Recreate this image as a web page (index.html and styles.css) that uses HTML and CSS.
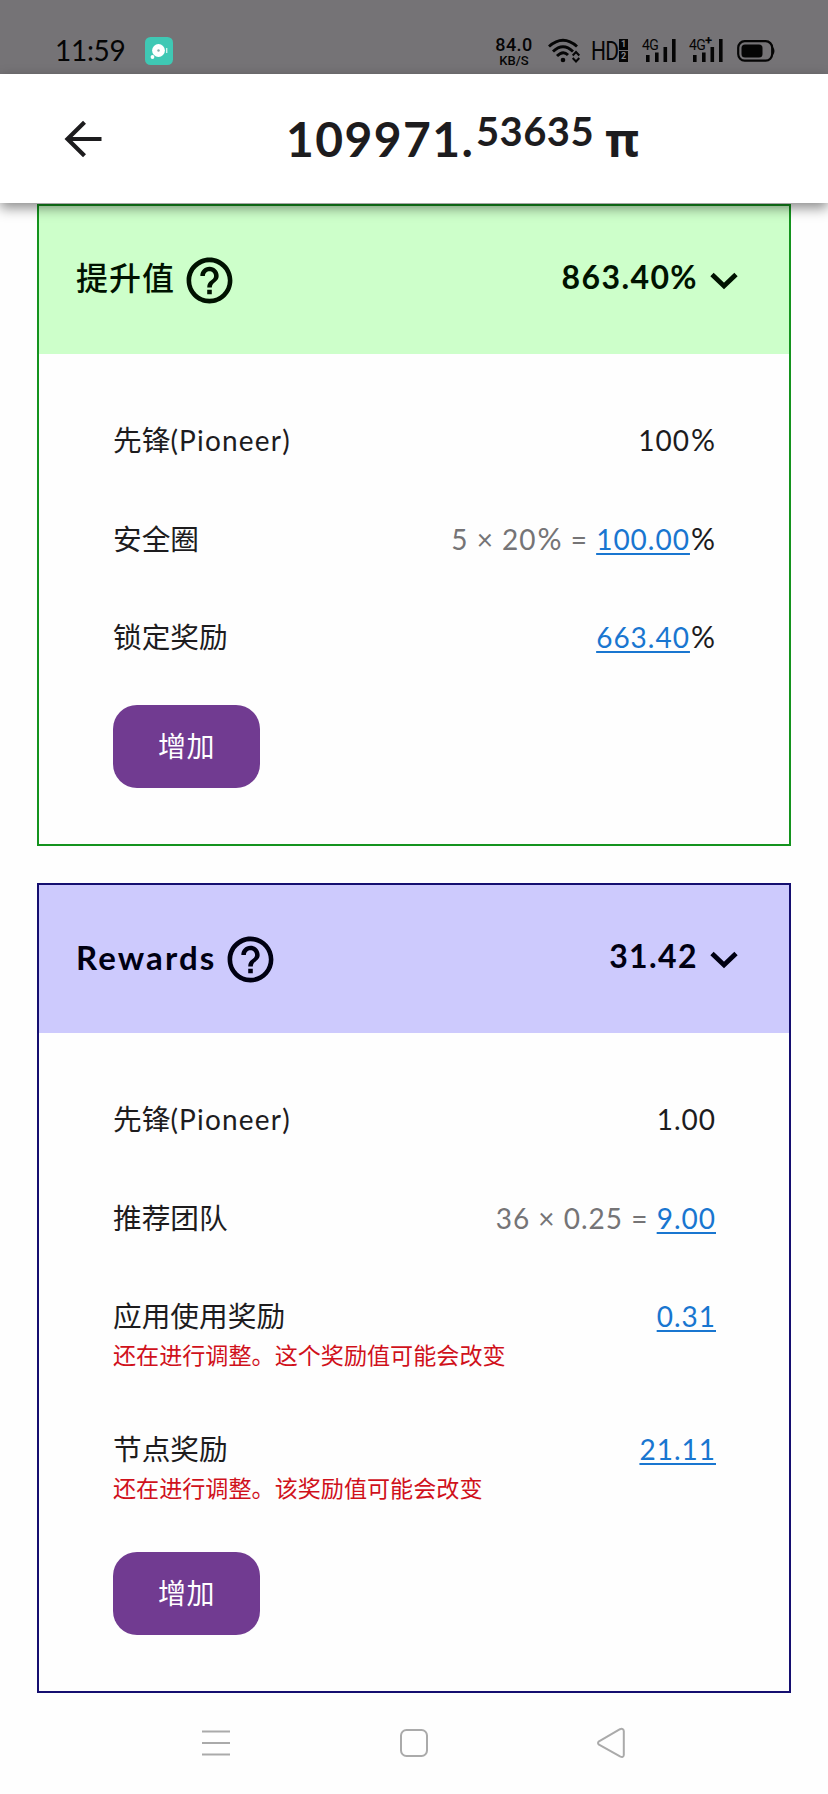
FILE: index.html
```html
<!DOCTYPE html>
<html lang="zh-CN">
<head>
<meta charset="utf-8">
<title>Pi</title>
<link rel="stylesheet" href="styles.css">
</head>
<body>
<div class="status">
  <span class="clock">11:59</span>
  <svg class="app" width="28" height="28" viewBox="0 0 28 28"><rect width="28" height="28" rx="5.5" fill="#3fc8b4"/><circle cx="13.5" cy="13.5" r="6.4" fill="#fff"/><circle cx="13.5" cy="13.5" r="1.2" fill="#8aa"/><circle cx="7.5" cy="20" r="1.9" fill="#fff"/><path d="M21.7 11v5" stroke="#d9f5f0" stroke-width="1.3"/></svg>
  <span class="speed"><span class="rate">84.0</span><span class="unit">KB/S</span></span>
  <svg class="wifi" width="32" height="26" viewBox="0 0 32 26" fill="none" stroke="#050505" stroke-width="2.9"><path d="M1 8.5Q15 -4 29 8.5M5 13.5Q15 4 25 13.5M9 18Q15 12 20 17"/><circle cx="15" cy="22" r="2.3" fill="#050505" stroke="none"/><path d="M24.7 17.5l3.3-3.5 3.3 3.5M24.7 20l3.3 3.5 3.3-3.5" stroke-width="2"/></svg>
  <span class="hd">HD</span>
  <span class="sims"><span class="sim">1</span><span class="sim">2</span></span>
  <span class="net net-one">4G<svg class="bars" width="30" height="24" viewBox="0 0 30 24" fill="#050505"><path d="M0 17h3.6v7H0zM9 14.5h3.6V24H9zM17.5 9h3.6v15h-3.6zM26 1h3.6v23H26z"/></svg></span>
  <span class="net">4G<span class="plus">+</span><svg class="bars" width="30" height="24" viewBox="0 0 30 24" fill="#050505"><path d="M0 17h3.6v7H0zM9 14.5h3.6V24H9zM17.5 9h3.6v15h-3.6zM26 1h3.6v23H26z"/></svg></span>
  <svg class="battery" width="39" height="22" viewBox="0 0 39 22"><rect x="1.2" y="1.2" width="34" height="19.4" rx="6.5" fill="none" stroke="#050505" stroke-width="2.2"/><rect x="4.5" y="4.4" width="21" height="13" rx="3.5" fill="#050505"/><path d="M36 7q3 4 0 8z" fill="#050505"/></svg>
</div>
<header class="bar">
  <svg class="back" width="38" height="38" viewBox="0 0 38 38" fill="none" stroke="#1d1c1e" stroke-width="4.2"><path d="M20.5 2.2L3.5 19l17 16.8M3 19h34.5"/></svg>
  <div class="balance"><span class="whole">109971.</span><span class="decimals">53635</span><span class="pi">π</span></div>
</header>
<main class="cards">
  <section class="card green">
    <div class="card-head">
      <span class="name cn">提升值</span>
      <svg class="help" width="55" height="55" viewBox="0 0 24 24"><path d="M11 18h2v-2h-2v2zm1-16C6.48 2 2 6.48 2 12s4.48 10 10 10 10-4.48 10-10S17.52 2 12 2zm0 18c-4.41 0-8-3.59-8-8s3.59-8 8-8 8 3.59 8 8-3.59 8-8 8zm0-14c-2.21 0-4 1.79-4 4h2c0-1.1.9-2 2-2s2 .9 2 2c0 2-3 1.750-3 5h2c0-2.250 3-2.500 3-5 0-2.210-1.790-4-4-4z"/></svg>
      <span class="total">863.40%</span>
      <svg class="chev" width="28" height="18" viewBox="0 0 28 18" fill="none" stroke="currentColor" stroke-width="4.8"><path d="M2 2.5l12 11.5L26 2.500"/></svg>
    </div>
    <div class="rows">
      <div class="row"><div class="label">先锋<span class="latin">(Pioneer)</span></div><div class="value">100<span class="pct">%</span></div></div>
      <div class="row"><div class="label">安全圈</div><div class="value"><span class="calc">5 × 20<span class="pct">%</span> = </span><a class="link">100.00</a><span class="pct">%</span></div></div>
      <div class="row"><div class="label">锁定奖励</div><div class="value"><a class="link">663.40</a><span class="pct">%</span></div></div>
      <button class="add">增加</button>
    </div>
  </section>
  <section class="card blue">
    <div class="card-head">
      <span class="name">Rewards</span>
      <svg class="help" width="55" height="55" viewBox="0 0 24 24"><path d="M11 18h2v-2h-2v2zm1-16C6.48 2 2 6.48 2 12s4.48 10 10 10 10-4.48 10-10S17.52 2 12 2zm0 18c-4.41 0-8-3.59-8-8s3.59-8 8-8 8 3.59 8 8-3.59 8-8 8zm0-14c-2.21 0-4 1.79-4 4h2c0-1.1.9-2 2-2s2 .9 2 2c0 2-3 1.750-3 5h2c0-2.250 3-2.500 3-5 0-2.210-1.790-4-4-4z"/></svg>
      <span class="total">31.42</span>
      <svg class="chev" width="28" height="18" viewBox="0 0 28 18" fill="none" stroke="currentColor" stroke-width="4.8"><path d="M2 2.5l12 11.5L26 2.500"/></svg>
    </div>
    <div class="rows">
      <div class="row"><div class="label">先锋<span class="latin">(Pioneer)</span></div><div class="value">1.00</div></div>
      <div class="row"><div class="label">推荐团队</div><div class="value"><span class="calc">36 × 0.25 = </span><a class="link">9.00</a></div></div>
      <div class="row noted"><div class="label">应用使用奖励<div class="note">还在进行调整。这个奖励值可能会改变</div></div><div class="value"><a class="link">0.31</a></div></div>
      <div class="row noted"><div class="label">节点奖励<div class="note">还在进行调整。该奖励值可能会改变</div></div><div class="value"><a class="link">21.11</a></div></div>
      <button class="add">增加</button>
    </div>
  </section>
</main>
<nav class="nav">
  <svg width="28" height="32" viewBox="0 0 28 32" fill="none" stroke="#aaa" stroke-width="2"><path d="M0 4.5h28M0 16h28M0 27.5h28"/></svg>
  <svg width="28" height="32" viewBox="0 0 28 32" fill="none" stroke="#aaa" stroke-width="2"><rect x="1" y="3" width="26" height="26" rx="5.5"/></svg>
  <svg width="28" height="32" viewBox="0 0 28 32" fill="none" stroke="#aaa" stroke-width="2" stroke-linejoin="round"><path d="M2 14.3L23 2.2Q26.5 1 26.8 4V28Q26.5 31 23 29.3L2 17.7Q0 16 2 14.3z"/></svg>
</nav>
</body>
</html>
```
FILE: styles.css
```css
* { box-sizing: border-box; }
body {
  margin: 0;
  width: 828px;
  height: 1794px;
  overflow: hidden;
  background: #fefefe;
  color: #1d1c1e;
  font-family: Lato, "Noto Sans CJK SC", sans-serif;
}
svg { display: block; flex: none; }

.status {
  display: flex;
  align-items: flex-start;
  height: 74px;
  padding: 37px 0 0 55px;
  background: #757376;
  color: #050505;
}
.clock { width: 90px; font-size: 28px; line-height: 27px; letter-spacing: -.3px; white-space: nowrap; }
.speed {
  display: flex;
  flex-direction: column;
  align-items: center;
  width: 38px;
  margin-left: 322px;
  font-family: Roboto, sans-serif;
  font-weight: 500;
}
.rate { font-size: 18px; line-height: 15px; letter-spacing: .4px; }
.unit { font-size: 13px; line-height: 17px; }
.wifi { margin: 1px 0 0 15px; }
.hd { width: 27px; margin-left: 11px; font: 25px/29px Roboto, sans-serif; letter-spacing: -1px; transform: scaleX(.84); transform-origin: left; }
.sims { display: flex; flex-direction: column; gap: 1px; margin: 2px 0 0 1px; }
.sim { width: 9px; height: 11px; background: #050505; color: #8a888b; font: bold 9px/11px Roboto, sans-serif; text-align: center; }
.net { position: relative; width: 37px; height: 28px; margin-left: 8px; font: 14px/16px Roboto, sans-serif; letter-spacing: -.5px; white-space: nowrap; }
.net-one { margin-left: 14px; margin-right: 2px; }
.bars { position: absolute; left: 4px; top: 1px; }
.plus { position: absolute; left: 16px; top: -4px; font-size: 13px; font-weight: 700; }
.battery { margin: 3px 0 0 11px; }

.bar {
  position: relative;
  z-index: 1;
  display: flex;
  align-items: center;
  height: 129px;
  padding: 0 0 0 64px;
  background: #fff;
  box-shadow: 0 5px 12px rgba(0, 0, 0, .45);
}
.balance { display: flex; align-items: flex-start; margin-left: 184px; height: 60px; font-weight: 700; }
.whole { width: 190px; font-size: 48px; line-height: 60px; letter-spacing: 1.4px; }
.decimals { width: 122px; font-size: 40px; line-height: 45px; letter-spacing: .4px; font-weight: 700; }
.pi { margin-left: 7px; font: 700 46px/60px "Noto Sans", sans-serif; }

.cards { display: flex; flex-direction: column; gap: 37px; padding: 1px 37px 0; }
.card { border: 2px solid; background: #fefefe; }
.green { height: 642px; border-color: #14931e; }
.blue { height: 810px; border-color: #150f70; }
.card-head { display: flex; align-items: center; height: 148px; padding: 0 51px 0 37px; }
.green .card-head { background: #cdffca; color: #001200; }
.blue .card-head { background: #cdcafd; color: #000012; }
.name { font-size: 33px; font-weight: 700; line-height: 40px; letter-spacing: 2.1px; margin-top: -5px; }
.cn { font-size: 32px; font-weight: 500; letter-spacing: 1px; }
.help { margin: 1px 0 0 7px; fill: currentColor; }
.total { margin: -6px 12px 0 auto; font-size: 32px; font-weight: 700; line-height: 40px; letter-spacing: 1.4px; }
.chev { margin-top: 2px; }

.rows { padding: 37px 74px 0; }
.row { display: flex; justify-content: space-between; height: 98.5px; padding-top: 29px; font-size: 28px; line-height: 40px; }
.noted { height: 133px; }
.label { font-size: 28.7px; white-space: nowrap; }
.latin { font-size: 28px; letter-spacing: 1.2px; }
.value { letter-spacing: 1px; margin-right: -1px; white-space: pre; }
.pct { padding-left: 1px; font-size: 30px; line-height: 1; }
.calc { color: #757476; }
.link { color: #1976d0; text-decoration: underline; text-decoration-thickness: 2px; text-underline-offset: 3px; }
.note { color: #d0111b; font-size: 23.1px; line-height: 38px; }
.add {
  display: block;
  width: 147px;
  height: 83px;
  margin-top: 18px;
  padding: 0 0 3px;
  border: 0;
  border-radius: 24px;
  background: #713b91;
  color: #fff;
  font: 28px/40px "Noto Sans CJK SC", sans-serif;
  letter-spacing: .5px;
}
.blue .add { margin-top: 19px; }
.nav { display: flex; justify-content: space-between; padding: 34px 203px 0 202px; }
```
